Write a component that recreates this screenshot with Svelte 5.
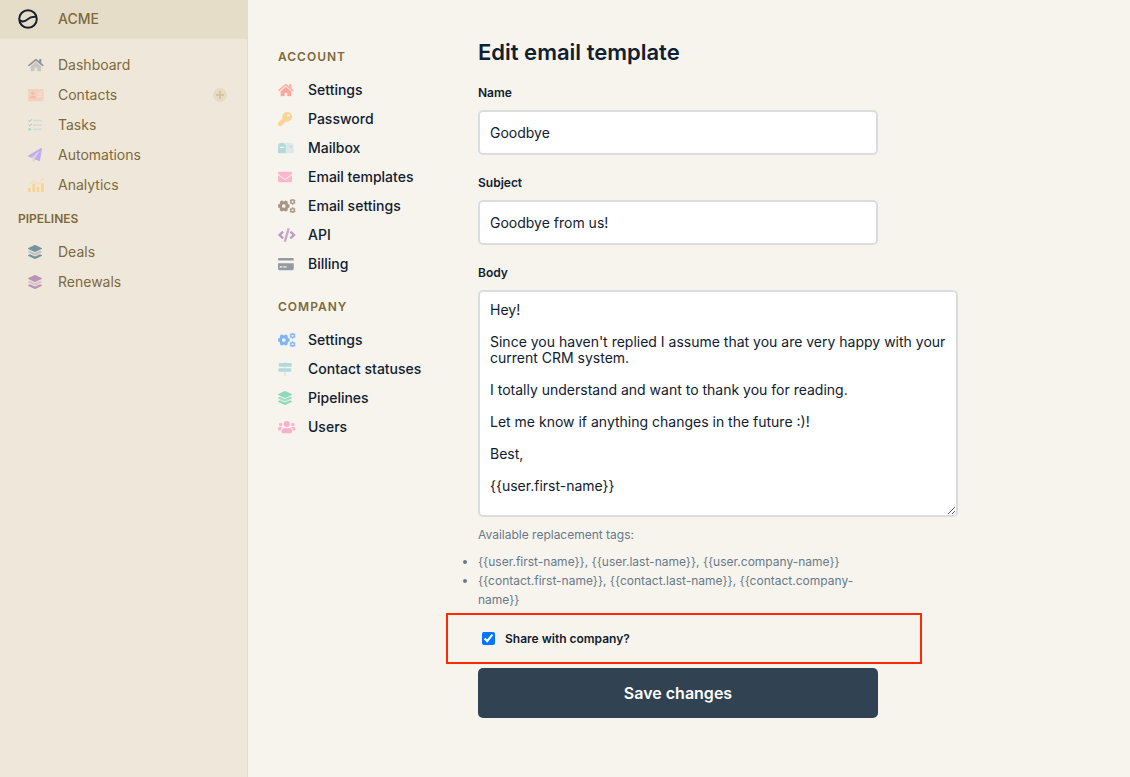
<script>
  const layers = [
    ['M12.41 148.02l232.94 105.67c6.8 3.09 14.49 3.09 21.29 0l232.94-105.67c16.55-7.51 16.55-32.52 0-40.03L266.65 2.31a25.607 25.607 0 0 0-21.29 0L12.41 107.98c-16.55 7.51-16.55 32.53 0 40.04z', 1],
    ['M499.59 236.3l-58.1-26.33-161.64 73.27c-7.56 3.43-15.59 5.17-23.86 5.17s-16.29-1.74-23.86-5.17L70.51 209.97l-58.1 26.33c-16.55 7.5-16.55 32.5 0 40l232.94 105.59c6.8 3.08 14.49 3.08 21.29 0L499.59 276.3c16.55-7.5 16.55-32.5 0-40z', 0.4],
    ['M499.59 364.1l-57.86-26.23-161.87 73.37c-7.56 3.43-15.59 5.17-23.86 5.17s-16.29-1.74-23.86-5.17L70.29 337.87 12.41 364.1c-16.55 7.5-16.55 32.5 0 40l232.94 105.59c6.8 3.08 14.49 3.08 21.29 0L499.59 404.1c16.55-7.5 16.55-32.5 0-40z', 1],
  ];
  const houseBody = 'M280.37 148.26L96 300.11V464a16 16 0 0 0 16 16l112.06-.29a16 16 0 0 0 15.92-16V368a16 16 0 0 1 16-16h64a16 16 0 0 1 16 16v95.64a16 16 0 0 0 16 16.05L464 480a16 16 0 0 0 16-16V300L295.67 148.26a12.19 12.19 0 0 0-15.3 0z';
  const houseRoof = 'M571.6 251.47L488 182.56V44.05a12 12 0 0 0-12-12h-56a12 12 0 0 0-12 12v72.61L318.47 43a48 48 0 0 0-61 0L4.34 251.47a12 12 0 0 0-1.6 16.9l25.5 31A12 12 0 0 0 45.15 301l235.22-193.74a12.19 12.19 0 0 1 15.3 0L530.9 301a12 12 0 0 0 16.9-1.6l25.5-31a12 12 0 0 0-1.7-16.93z';

  // Outline of a toothed wheel with a round hole in its middle.
  function gear(cx, cy, outer, inner, hole, turn = 0) {
    const pts = [];
    const step = Math.PI / 3;
    for (let i = 0; i < 6; i++) {
      const a = i * step + turn;
      for (const [da, r] of [[-0.36, inner], [-0.24, outer], [0.24, outer], [0.36, inner]]) {
        pts.push(`${(cx + r * Math.cos(a + da)).toFixed(1)} ${(cy + r * Math.sin(a + da)).toFixed(1)}`);
      }
    }
    return `M${pts.join('L')}zM${cx - hole} ${cy}a${hole} ${hole} 0 1 0 ${2 * hole} 0a${hole} ${hole} 0 1 0 ${-2 * hole} 0z`;
  }

  const icons = {
    home: { w: 576, p: [[houseBody, 0.4], [houseRoof, 1]] },
    house: { w: 576, p: [[houseBody, 1], [houseRoof, 0.85]] },
    card: {
      w: 576,
      p: [
        ['M48 32h480a48 48 0 0 1 48 48v352a48 48 0 0 1-48 48H48a48 48 0 0 1-48-48V80a48 48 0 0 1 48-48zM352 160v32h160v-32zM352 224v32h160v-32zM352 288v32h160v-32z', 0.5],
        ['M176 128a64 64 0 1 1 0 128a64 64 0 1 1 0-128zM131 288h90c37 0 67 26 67 58v19c0 10-10 19-22 19H86c-12 0-22-9-22-19v-19c0-32 30-58 67-58z', 1],
      ],
    },
    tasks: {
      w: 512,
      p: [
        ['M192 64h304a16 16 0 0 1 16 16v32a16 16 0 0 1-16 16H192a16 16 0 0 1-16-16V80a16 16 0 0 1 16-16zM192 224h304a16 16 0 0 1 16 16v32a16 16 0 0 1-16 16H192a16 16 0 0 1-16-16v-32a16 16 0 0 1 16-16zM192 384h304a16 16 0 0 1 16 16v32a16 16 0 0 1-16 16H192a16 16 0 0 1-16-16v-32a16 16 0 0 1 16-16z', 0.4],
        ['M0 92l25-25 38 36 70-71 26 26-95 97zM0 251l25-25 38 36 70-71 26 26-95 97zM64 368a48 48 0 1 1 0 96a48 48 0 1 1 0-96z', 1],
      ],
    },
    plane: {
      w: 512,
      p: [
        ['M476 3.2L12.5 270.6c-18.1 10.4-15.8 35.6 2.2 43.2L121 358.4l287.3-253.2c5.5-4.9 13.3 2.6 8.6 8.3L238 407l168.6 71.2c14.2 6 30.4-2.9 33-18.2l72-432C515 7.8 493.3-6.8 476 3.2z', 1],
        ['M121 358.4l287.3-253.2c5.5-4.9 13.3 2.6 8.6 8.3L238 407l-19.5 96.3C204.5 520.4 176 511.1 176 487.5v-106z', 0.4],
      ],
    },
    chart: {
      w: 576,
      p: [
        ['M0 368h96v144H0zM160 208h96v304h-96zM320 320h96v192h-96zM480 192h96v320h-96z', 1],
        ['M22 220L176 62a24 24 0 0 1 34 0l150 124L498 44a48 48 0 1 1 34 38L382 236a24 24 0 0 1-36 0L196 112 60 252z', 0.4],
      ],
    },
    layers: { w: 512, p: layers },
    stack: { w: 512, p: layers.map(([d, o]) => [d, o < 1 ? 0.85 : 1]) },
    key: {
      w: 512,
      p: [
        ['M512 176C512 273.2 433.2 352 336 352c-11.22 0-22.19-1.06-32.83-3.07L279.16 375.94A24 24 0 0 1 261.22 384H224v40a24 24 0 0 1-24 24h-40v40a24 24 0 0 1-24 24H24a24 24 0 0 1-24-24v-78.06a24 24 0 0 1 7.03-16.97L168.83 231.17C163.11 213.81 160 195.27 160 176 160 78.8 238.8 0 336 0S512 78.51 512 176zM336 128a48 48 0 1 0 96 0 48 48 0 1 0-96 0z', 1],
      ],
    },
    mailbox: {
      w: 576,
      p: [
        ['M432 64H220c42 30 68 76 68 144v240h256a32 32 0 0 0 32-32V208A144 144 0 0 0 432 64zM512 272h-64v-64h-64v-48h128z', 0.4],
        ['M144 64A144 144 0 0 0 0 208v208a32 32 0 0 0 32 32h256V208A144 144 0 0 0 144 64zM224 256H64v-48h160z', 1],
        ['M384 160h128v112h-64v-64h-64z', 0.8],
      ],
    },
    envelope: {
      w: 512,
      p: [
        ['M502.3 190.8c3.9-3.1 9.7-.2 9.7 4.7V400c0 26.5-21.5 48-48 48H48c-26.5 0-48-21.5-48-48V195.6c0-5 5.7-7.8 9.7-4.7 22.4 17.4 52.1 39.5 154.1 113.6 21.1 15.4 56.7 47.8 92.2 47.6 35.7.3 72-32.8 92.3-47.6 102-74.1 131.6-96.3 154-113.7z', 1],
        ['M256 320c23.2.4 56.6-29.2 73.4-41.4 132.7-96.3 142.8-104.7 173.4-128.7 5.8-4.5 9.2-11.5 9.2-18.9v-19c0-26.5-21.5-48-48-48H48c-26.5 0-48 21.5-48 48v19c0 7.4 3.4 14.3 9.2 18.9 30.6 23.9 40.7 32.4 173.4 128.7 16.8 12.2 50.2 41.8 73.4 41.4z', 1],
      ],
    },
    cogs: {
      w: 640,
      p: [
        [gear(212, 256, 216, 176, 68), 1],
        [gear(534, 98, 114, 90, 38, 0.5), 0.95],
        [gear(534, 414, 114, 90, 38, 0.5), 0.95],
      ],
    },
    code: {
      w: 640,
      p: [
        ['M278.9 511.5l-61-17.7c-6.4-1.8-10-8.5-8.2-14.9L346.2 8.7c1.8-6.4 8.5-10 14.9-8.2l61 17.7c6.4 1.8 10 8.5 8.2 14.9L293.8 503.3c-1.9 6.4-8.5 10.1-14.9 8.2z', 0.8],
        ['M164.9 399.3l43.5-46.4c4.6-4.9 4.3-12.7-.8-17.2L117 256l90.6-79.7c5.1-4.5 5.5-12.3.8-17.2l-43.5-46.4c-4.5-4.8-12.1-5.1-17-.5L3.8 247.2c-5.1 4.7-5.1 12.8 0 17.5l144.1 135.1c4.9 4.6 12.5 4.4 17-.5zM492.1 399.9l144.1-135.1c5.1-4.7 5.1-12.8 0-17.5L492.1 112.1c-4.8-4.5-12.4-4.3-17 .5L431.6 159c-4.6 4.9-4.3 12.7.8 17.2L523 256l-90.6 79.7c-5.1 4.5-5.5 12.3-.8 17.2l43.5 46.4c4.5 4.9 12.1 5.1 17 .6z', 1],
      ],
    },
    credit: {
      w: 576,
      p: [
        ['M0 432a48 48 0 0 0 48 48h480a48 48 0 0 0 48-48V224H0zM192 340h120v48H192zM64 340h96v48H64z', 1],
        ['M576 80v48H0V80a48 48 0 0 1 48-48h480a48 48 0 0 1 48 48z', 1],
      ],
    },
    signs: {
      w: 512,
      p: [
        ['M224 0h64v40h-64zM224 176h64v48h-64zM224 360h64v152h-64z', 0.4],
        ['M52 40h424l32 40v56l-32 40H52a24 24 0 0 1-24-24V64a24 24 0 0 1 24-24zM460 224H36L4 264v56l32 40h424a24 24 0 0 0 24-24v-88a24 24 0 0 0-24-24z', 1],
      ],
    },
    users: {
      w: 640,
      p: [
        ['M96 224a64 64 0 1 0 0-128a64 64 0 1 0 0 128zM544 224a64 64 0 1 0 0-128a64 64 0 1 0 0 128zM576 256h-64c-17.6 0-33.5 7.1-45.1 18.6 40.3 22.1 68.9 62 75.1 109.4h66c17.7 0 32-14.3 32-32v-32c0-35.3-28.7-64-64-64zM173.1 274.6C161.5 263.1 145.6 256 128 256H64c-35.3 0-64 28.7-64 64v32c0 17.7 14.3 32 32 32h65.9c6.3-47.4 34.9-87.3 75.2-109.4z', 0.9],
        ['M320 256a112 112 0 1 0 0-224a112 112 0 1 0 0 224zM396.8 288h-8.3c-20.8 10-43.9 16-68.5 16s-47.6-6-68.5-16h-8.3C179.6 288 128 339.6 128 403.2V432c0 26.5 21.5 48 48 48h288c26.5 0 48-21.5 48-48v-28.8c0-63.6-51.6-115.2-115.2-115.2z', 1],
      ],
    },
  };

  const mainLinks = [
    { icon: 'home', label: 'Dashboard', color: '#8f959b' },
    { icon: 'card', label: 'Contacts', color: '#fabba8', add: true },
    { icon: 'tasks', label: 'Tasks', color: '#a5d3d6' },
    { icon: 'plane', label: 'Automations', color: '#c2abee' },
    { icon: 'chart', label: 'Analytics', color: '#f8d294' },
  ];
  const pipelineLinks = [
    { icon: 'layers', label: 'Deals', color: '#76929f' },
    { icon: 'layers', label: 'Renewals', color: '#b994b5' },
  ];
  const groups = [
    {
      title: 'ACCOUNT',
      links: [
        { icon: 'house', label: 'Settings', color: '#ffa69b' },
        { icon: 'key', label: 'Password', color: '#fad495' },
        { icon: 'mailbox', label: 'Mailbox', color: '#b3d9de' },
        { icon: 'envelope', label: 'Email templates', color: '#fdb5ca' },
        { icon: 'cogs', label: 'Email settings', color: '#a99584' },
        { icon: 'code', label: 'API', color: '#ba9bc2' },
        { icon: 'credit', label: 'Billing', color: '#939ba2' },
      ],
    },
    {
      title: 'COMPANY',
      links: [
        { icon: 'cogs', label: 'Settings', color: '#7fb5f8' },
        { icon: 'signs', label: 'Contact statuses', color: '#b3d9de' },
        { icon: 'stack', label: 'Pipelines', color: '#8ddbbb' },
        { icon: 'users', label: 'Users', color: '#ffaecb' },
      ],
    },
  ];

  const tags = [
    '{{user.first-name}}, {{user.last-name}}, {{user.company-name}}',
    '{{contact.first-name}}, {{contact.last-name}}, {{contact.company-name}}',
  ];

  let name = $state('Goodbye');
  let subject = $state('Goodbye from us!');
  let body = $state(
    [
      'Hey!',
      "Since you haven't replied I assume that you are very happy with your current CRM system.",
      'I totally understand and want to thank you for reading.',
      'Let me know if anything changes in the future :)!',
      'Best,',
      '{{user.first-name}}',
    ].join('\n\n'),
  );
  let shared = $state(true);
</script>

{#snippet glyph(id, color)}
  <svg class="glyph" viewBox="0 0 {icons[id].w} 512" fill={color} fill-rule="evenodd" aria-hidden="true">
    {#each icons[id].p as [d, opacity]}
      <path {d} {opacity} />
    {/each}
  </svg>
{/snippet}

{#snippet sideLink(link)}
  <li class="side-row">
    <a class="link" href="#top"><span class="slot">{@render glyph(link.icon, link.color)}</span>{link.label}</a>
    {#if link.add}
      <button class="add" type="button" aria-label="Add contact">
        <svg viewBox="0 0 14 14" aria-hidden="true">
          <circle cx="7" cy="7" r="7" fill="#e6dcc3" />
          <path d="M7 3v8M3 7h8" stroke="#d3c5a0" stroke-width="2" />
        </svg>
      </button>
    {/if}
  </li>
{/snippet}

<div class="app">
  <aside class="sidebar">
    <a class="brand" href="#top">
      <svg class="logo" viewBox="0 0 20 20" fill="none" stroke="#14212e" stroke-width="2" aria-hidden="true">
        <circle cx="10" cy="10" r="8.8" />
        <path d="M1.5 11.5C4 12.8 7 12.8 9.5 10.4S15 7.3 18.5 7.8" />
      </svg>
      ACME
    </a>
    <nav aria-label="Main">
      <ul>
        {#each mainLinks as link}{@render sideLink(link)}{/each}
      </ul>
      <h2 class="side-title">PIPELINES</h2>
      <ul>
        {#each pipelineLinks as link}{@render sideLink(link)}{/each}
      </ul>
    </nav>
  </aside>

  <nav class="submenu" aria-label="Settings">
    {#each groups as group}
      <section>
        <h2>{group.title}</h2>
        <ul>
          {#each group.links as link}
            <li>
              <a class="link" href="#top"><span class="slot">{@render glyph(link.icon, link.color)}</span>{link.label}</a>
            </li>
          {/each}
        </ul>
      </section>
    {/each}
  </nav>

  <main>
    <h1>Edit email template</h1>
    <form onsubmit={(e) => e.preventDefault()}>
      <div class="field">
        <label for="name">Name</label>
        <input id="name" type="text" bind:value={name} />
      </div>
      <div class="field">
        <label for="subject">Subject</label>
        <input id="subject" type="text" bind:value={subject} />
      </div>
      <div class="field wide">
        <label for="body">Body</label>
        <textarea id="body" bind:value={body}></textarea>
      </div>
      <div class="hint">
        <p>Available replacement tags:</p>
        <ul>
          {#each tags as tag}<li>{tag}</li>{/each}
        </ul>
      </div>
      <div class="share">
        <label><input type="checkbox" bind:checked={shared} />Share with company?</label>
      </div>
      <button class="save" type="submit">Save changes</button>
    </form>
  </main>
</div>

<style>
  :global(body) {
    margin: 0;
    background: #f7f4ed;
  }
  .app {
    display: flex;
    min-height: 100vh;
    color: #102030;
    font: 14px/20px Inter, 'Liberation Sans', sans-serif;
  }
  .app *,
  .app {
    box-sizing: border-box;
  }
  h1,
  h2,
  p,
  ul {
    margin: 0;
    padding: 0;
  }
  ul {
    list-style: none;
  }
  .sidebar {
    flex: 0 0 248px;
    background: #efe8da;
    border-right: 1px solid #e6ddc8;
    color: #7e693a;
  }
  .brand {
    display: flex;
    align-items: center;
    gap: 20px;
    height: 39px;
    padding: 0 18px 1px;
    background: #e6ddc8;
    color: inherit;
    font-weight: 500;
    text-decoration: none;
  }
  .logo {
    width: 20px;
    height: 20px;
  }
  .sidebar nav {
    padding: 11px 20px 20px 18px;
  }
  .side-row {
    display: flex;
    align-items: center;
    justify-content: space-between;
    height: 30px;
    padding-left: 10px;
  }
  .link {
    display: flex;
    align-items: center;
    color: inherit;
    text-decoration: none;
  }
  .slot {
    display: flex;
    flex: 0 0 30px;
  }
  .glyph {
    display: block;
    height: 14px;
  }
  .add {
    display: flex;
    padding: 0;
    border: 0;
    background: none;
  }
  .add svg {
    width: 14px;
    height: 14px;
  }
  .side-title {
    margin: 9px 0 8px;
    font-size: 12px;
    line-height: 20px;
    font-weight: 600;
  }
  .submenu {
    flex: 0 0 230px;
    padding: 47px 20px 20px 30px;
    font-weight: 500;
  }
  .submenu section {
    margin-bottom: 19px;
  }
  .submenu h2 {
    margin-bottom: 8px;
    color: #7e693a;
    font-size: 12px;
    line-height: 20px;
    font-weight: 600;
    letter-spacing: 1px;
  }
  .submenu .link {
    height: 29px;
  }
  main {
    flex: 1 1 0;
    min-width: 0;
    padding: 38px 20px 40px 0;
  }
  h1 {
    margin-bottom: 19px;
    font-size: 22px;
    line-height: 28px;
    font-weight: 600;
  }
  form {
    max-width: 480px;
  }
  .field {
    display: flex;
    flex-direction: column;
    gap: 9px;
    max-width: 400px;
    margin-bottom: 20px;
  }
  .wide {
    max-width: none;
    margin-bottom: 8px;
  }
  label {
    font-size: 12px;
    line-height: 16px;
    font-weight: 600;
  }
  .field input,
  textarea {
    display: block;
    width: 100%;
    margin: 0;
    padding: 10px;
    border: 2px solid #dadce0;
    border-radius: 5px;
    background: #fff;
    color: #102030;
    font: inherit;
  }
  .field input {
    height: 45px;
  }
  textarea {
    height: 227px;
    line-height: 16px;
    resize: vertical;
  }
  .hint {
    max-width: 400px;
    color: #67798a;
    font-size: 12px;
    line-height: 19px;
  }
  .hint p {
    margin-bottom: 8px;
  }
  .hint ul {
    list-style: disc;
  }
  .share {
    max-width: 476px;
    margin: 4px 0 4px -32px;
    padding: 15px 34px;
    border: 2px solid #ff2b00;
  }
  .share label {
    display: flex;
    align-items: center;
    gap: 10px;
    line-height: 17px;
  }
  .share input {
    width: 13px;
    height: 13px;
    margin: 0;
    accent-color: #0075ff;
  }
  .save {
    display: block;
    width: 100%;
    max-width: 400px;
    height: 50px;
    padding: 0 10px 1px;
    border: 0;
    border-radius: 5px;
    background: #314252;
    color: #fff;
    font: 600 16px/20px Inter, 'Liberation Sans', sans-serif;
  }
</style>
